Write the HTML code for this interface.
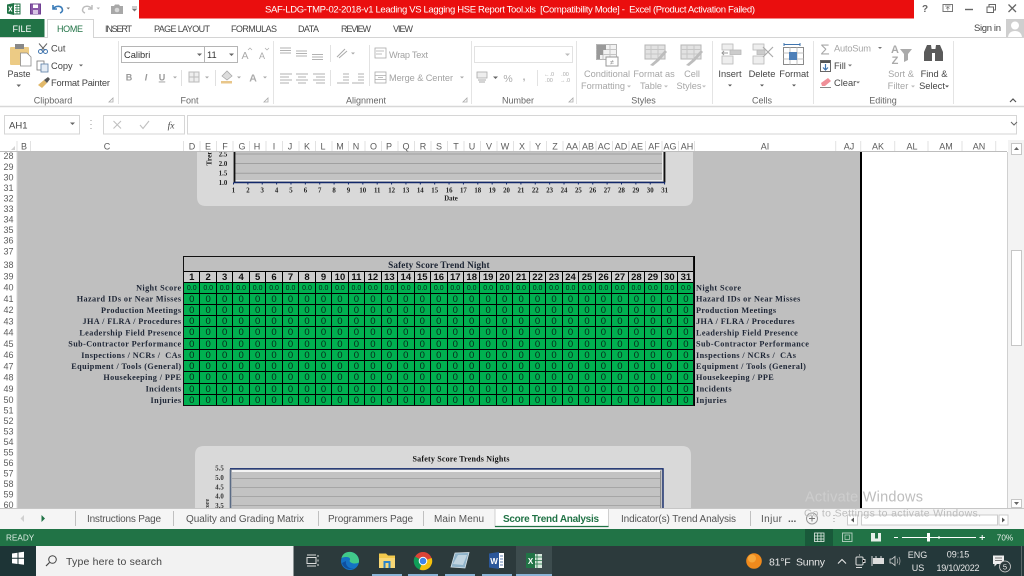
<!DOCTYPE html>
<html lang="en"><head><meta charset="utf-8"><title>Excel</title>
<style>
html,body{margin:0;padding:0;background:#fff}
#p{position:relative;width:1024px;height:576px;overflow:hidden;background:#fff;font-family:"Liberation Sans",sans-serif;filter:blur(.3px)}
#p>div,#p>svg,#p>table{position:absolute}
svg text{font-family:"Liberation Sans",sans-serif}
.sf text,text.sf{font-family:"Liberation Serif",serif;font-weight:bold}
#t{left:183px;top:256px;width:511px;table-layout:fixed;border-collapse:collapse;font-size:9.5px;color:#08281a;text-align:center}
#t td{border:1px solid #000;padding:0;background:#00b050;line-height:9px;overflow:hidden;height:10px}
#t tr.h td{background:#cdcdcd;color:#111;font-weight:bold;font-size:9.5px;height:10px}
#t tr.s td{font-size:7px;color:#06241a}
#t td.ti{background:#bfbfbf;font:bold 9.2px "Liberation Serif",serif;color:#1c2433;height:13px;padding-top:1px;line-height:12px;letter-spacing:.12px}
</style></head><body>
<div id="p">
<div style="left:0;top:151px;width:1024px;height:358px;background:#fff"></div>
<div style="left:17px;top:152px;width:843px;height:357px;background:#bfbfbf"></div>
<div style="left:860px;top:152px;width:2px;height:357px;background:#000"></div>
<div style="left:1007px;top:152px;width:1px;height:357px;background:#d0d0d0"></div>
<div style="left:1008px;top:140px;width:16px;height:369px;background:#f3f3f3"></div>
<div style="left:1010.5px;top:250px;width:11.5px;height:96px;background:#fff;border:1px solid #c6c6c6;box-sizing:border-box"></div>
<div style="left:1011px;top:143px;width:11px;height:12px;background:#fff;border:1px solid #c6c6c6;box-sizing:border-box"></div>
<div style="left:1011px;top:499px;width:11px;height:9px;background:#fff;border:1px solid #c6c6c6;box-sizing:border-box"></div>

<svg style="left:0;top:0" width="1024" height="576" viewBox="0 0 1024 576">
<!-- top chart -->
<path d="M197 152H693V197Q693 206 684 206H206Q197 206 197 197Z" fill="#d9d9d9"/>
<rect x="234" y="152" width="431" height="30" fill="#c3c3c3"/>
<path d="M234 154H663M234 163.5H663M234 173.3H663" stroke="#a0a0a0" stroke-width="1"/>
<path d="M235 180.5H662.500V152" fill="none" stroke="#eee" stroke-width="1"/>
<path d="M234.5 152V182.5M664.5 152V182.5" fill="none" stroke="#111" stroke-width="1.800"/>
<path d="M234 182.5H665" stroke="#12286a" stroke-width="1.4"/>
<path d="M233 183.5H666" stroke="#12286a" stroke-width="2" stroke-dasharray="1 13.37"/>
<g class="sf" font-size="6.8" fill="#222" text-anchor="middle">
<text x="223" y="156.5">2.5</text><text x="223" y="166">2.0</text><text x="223" y="175.5">1.5</text><text x="223" y="185">1.0</text>
<text x="233.5" y="192.5">1</text><text x="247.9" y="192.5">2</text><text x="262.2" y="192.5">3</text><text x="276.6" y="192.5">4</text><text x="291" y="192.5">5</text><text x="305.4" y="192.5">6</text><text x="319.7" y="192.5">7</text><text x="334.1" y="192.5">8</text><text x="348.5" y="192.5">9</text><text x="362.8" y="192.5">10</text><text x="377.2" y="192.5">11</text><text x="391.6" y="192.5">12</text><text x="405.9" y="192.5">13</text><text x="420.3" y="192.5">14</text><text x="434.7" y="192.5">15</text><text x="449.1" y="192.5">16</text><text x="463.4" y="192.5">17</text><text x="477.8" y="192.5">18</text><text x="492.2" y="192.5">19</text><text x="506.5" y="192.5">20</text><text x="520.9" y="192.5">21</text><text x="535.3" y="192.5">22</text><text x="549.6" y="192.5">23</text><text x="564" y="192.5">24</text><text x="578.4" y="192.5">25</text><text x="592.7" y="192.5">26</text><text x="607.1" y="192.5">27</text><text x="621.5" y="192.5">28</text><text x="635.8" y="192.5">29</text><text x="650.2" y="192.5">30</text><text x="664.6" y="192.5">31</text>
<text x="451" y="200.5">Date</text>
<text transform="translate(211.5 158) rotate(-90)" font-size="7.500" text-anchor="middle">Tren</text>
</g>
<!-- bottom chart -->
<path d="M195 509V455Q195 446 204 446H682Q691 446 691 455V509Z" fill="#d9d9d9"/>
<rect x="231" y="469" width="432" height="40" fill="#c3c3c3"/>
<rect x="232" y="470" width="428" height="2" fill="#f4f4f4"/>
<path d="M232 478.5H660M232 487.5H660M232 496.5H660M232 505.5H660" stroke="#a6a6a6" stroke-width="1"/>
<path d="M230 468.8H663V509" fill="none" stroke="#12286a" stroke-width="1.4"/>
<path d="M230.5 469V509" stroke="#5a6b85" stroke-width="1.6"/>
<path d="M660.5 471V509" stroke="#8d8d8d" stroke-width="1"/>
<g class="sf" font-size="6.8" fill="#333" text-anchor="middle">
<text x="219.500" y="470.5" font-weight="normal">5.5</text><text x="219.500" y="480">5.0</text><text x="219.500" y="489.5">4.5</text><text x="219.500" y="498.5">4.0</text><text x="219.500" y="508">3.5</text>
<text transform="translate(209 506) rotate(-90)" font-size="6" text-anchor="middle">Score</text>
</g>
<text class="sf" x="461" y="461.5" font-size="8" fill="#111" text-anchor="middle" textLength="97">Safety Score Trends Nights</text>

<!-- row labels -->
<g class="sf" font-size="8.2" fill="#1d2535" text-anchor="end" letter-spacing=".4">
<text x="181.5" y="290.5">Night Score</text><text x="181.5" y="301.5">Hazard IDs or Near Misses</text><text x="181.5" y="313">Production Meetings</text><text x="181.5" y="324">JHA / FLRA / Procedures</text><text x="181.5" y="335.5">Leadership Field Presence</text><text x="181.5" y="346.5">Sub-Contractor Performance</text><text x="181.5" y="358" xml:space="preserve">Inspections / NCRs /  CAs</text><text x="181.5" y="369">Equipment / Tools (General)</text><text x="181.5" y="380">Housekeeping / PPE</text><text x="181.5" y="391.5">Incidents</text><text x="181.5" y="403">Injuries</text>
</g>
<g class="sf" font-size="8.2" fill="#1d2535" letter-spacing=".4">
<text x="696" y="290.5">Night Score</text><text x="696" y="301.5">Hazard IDs or Near Misses</text><text x="696" y="313">Production Meetings</text><text x="696" y="324">JHA / FLRA / Procedures</text><text x="696" y="335.5">Leadership Field Presence</text><text x="696" y="346.5">Sub-Contractor Performance</text><text x="696" y="358" xml:space="preserve">Inspections / NCRs /  CAs</text><text x="696" y="369">Equipment / Tools (General)</text><text x="696" y="380">Housekeeping / PPE</text><text x="696" y="391.5">Incidents</text><text x="696" y="403">Injuries</text>
</g>

<!-- row numbers -->
<path d="M17 152V509" stroke="#d4d4d4"/>
<g font-size="9" fill="#5c5c5c" text-anchor="middle">
<text x="8.5" y="159">28</text><text x="8.5" y="170">29</text><text x="8.5" y="180.5">30</text><text x="8.5" y="191">31</text><text x="8.5" y="201.5">32</text><text x="8.5" y="212">33</text><text x="8.5" y="222.5">34</text><text x="8.5" y="233">35</text><text x="8.5" y="243.5">36</text><text x="8.5" y="254.5">37</text><text x="8.5" y="268">38</text><text x="8.5" y="279.5">39</text><text x="8.5" y="290.5">40</text><text x="8.5" y="301.8">41</text><text x="8.5" y="313">42</text><text x="8.5" y="324.3">43</text><text x="8.5" y="335.5">44</text><text x="8.5" y="346.8">45</text><text x="8.5" y="358">46</text><text x="8.5" y="369.3">47</text><text x="8.5" y="380.5">48</text><text x="8.5" y="391.8">49</text><text x="8.5" y="403">50</text><text x="8.5" y="413.5">51</text><text x="8.5" y="424">52</text><text x="8.5" y="434.5">53</text><text x="8.5" y="445">54</text><text x="8.5" y="455.5">55</text><text x="8.5" y="466">56</text><text x="8.5" y="476.5">57</text><text x="8.5" y="487">58</text><text x="8.5" y="497.5">59</text><text x="8.5" y="508">60</text>
</g>

<!-- column header -->
<rect x="0" y="139" width="1008" height="12.5" fill="#fff"/>
<path d="M0 151.5H1007" stroke="#bdbdbd"/>
<path d="M17 141V151M30.5 141V151M183.5 141V151M200 141V151M216.5 141V151M233 141V151M249.500 141V151M266 141V151M282.5 141V151M299 141V151M315.500 141V151M332 141V151M348.5 141V151M365 141V151M381.500 141V151M398 141V151M414.5 141V151M431 141V151M447.500 141V151M464 141V151M480.5 141V151M497 141V151M513.500 141V151M530 141V151M546.5 141V151M563 141V151M579.500 141V151M596 141V151M612.5 141V151M629 141V151M645.500 141V151M662 141V151M678.5 141V151M694.5 141V151M835.7 141V151M860.7 141V151M894.7 141V151M928 141V151M962 141V151M995.700 141V151" stroke="#e2e2e2"/>
<path d="M11 150L15 150L15 146Z" fill="#d0d0d0"/>
<g font-size="9" fill="#5c5c5c" text-anchor="middle">
<text x="24" y="149.500">B</text><text x="107" y="149.500">C</text><text x="192" y="149.500">D</text><text x="208" y="149.500">E</text><text x="225" y="149.500">F</text><text x="242" y="149.500">G</text><text x="257" y="149.500">H</text><text x="274" y="149.500">I</text><text x="290" y="149.500">J</text><text x="307" y="149.500">K</text><text x="323" y="149.500">L</text><text x="340" y="149.500">M</text><text x="356" y="149.500">N</text><text x="373.500" y="149.500">O</text><text x="389" y="149.500">P</text><text x="406" y="149.500">Q</text><text x="423" y="149.500">R</text><text x="439" y="149.500">S</text><text x="456" y="149.500">T</text><text x="472" y="149.500">U</text><text x="489" y="149.500">V</text><text x="505" y="149.500">W</text><text x="522" y="149.500">X</text><text x="538" y="149.500">Y</text><text x="555" y="149.500">Z</text><text x="572" y="149.500">AA</text><text x="588" y="149.500">AB</text><text x="604" y="149.500">AC</text><text x="621" y="149.500">AD</text><text x="637" y="149.500">AE</text><text x="654" y="149.500">AF</text><text x="670" y="149.500">AG</text><text x="687" y="149.500">AH</text><text x="765" y="149.500">AI</text><text x="849" y="149.500">AJ</text><text x="878" y="149.500">AK</text><text x="912" y="149.500">AL</text><text x="946" y="149.500">AM</text><text x="979" y="149.500">AN</text>
</g>
<path d="M1016.500 147L1014 150H1019Z" fill="#666"/><path d="M1016.500 505L1014 502H1019Z" fill="#666"/>

<!-- title bar -->
<rect x="139" y="0" width="775" height="18.500" fill="#ea0e0e"/>
<text x="265" y="12.500" font-size="9.500" fill="#fff" textLength="490" xml:space="preserve">SAF-LDG-TMP-02-2018-v1 Leading VS Lagging HSE Report Tool.xls  [Compatibility Mode] -  Excel (Product Activation Failed)</text>
<!-- QAT -->
<rect x="12" y="4" width="8" height="10" fill="#fff" stroke="#1f7244"/><path d="M15 6.500H20M15 9H20M15 11.500H20M17 4V14" stroke="#1f7244" stroke-width=".7"/>
<path d="M7 4.500L14 3V15L7 13.500Z" fill="#1f7244"/><path d="M8.800 6.500L12 11.500M12 6.500L8.800 11.500" stroke="#fff" stroke-width="1.100"/>
<rect x="30.500" y="4" width="10" height="10" fill="#8a5aa8" stroke="#6f3f92"/><rect x="33" y="4.500" width="5" height="3.500" fill="#fff"/><rect x="33" y="10" width="5" height="4" fill="#d8c5e4"/>
<path d="M53 5V9H57M53 9C56 5 62 5.500 62.500 10Q62.500 12 60 13" fill="none" stroke="#3b7cb8" stroke-width="1.600"/>
<path d="M66.500 7.500H70L68.300 9.500Z" fill="#777"/>
<path d="M92 5V9H88M92 9C89 5 83 5.500 82.500 10Q82.500 12 85 13" fill="none" stroke="#bdbdbd" stroke-width="1.500"/>
<path d="M96.500 7.500H100L98.300 9.500Z" fill="#bbb"/>
<path d="M111 6H114L115 4.500H119L120 6H123V14H111Z" fill="#a8a8a8"/><circle cx="117" cy="10" r="2.300" fill="#d8d8d8"/>
<path d="M132 7H137M132.500 9L136.500 9L134.500 11Z" stroke="#777" stroke-width=".7" fill="#777"/>
<!-- window ctl -->
<text x="925" y="12" font-size="10" font-weight="bold" fill="#666" text-anchor="middle">?</text>
<rect x="943" y="4.500" width="9.500" height="7" fill="none" stroke="#777"/><path d="M945 6H950.500M947.800 10.500V7.500M946 8.500L947.800 7L949.500 8.500" fill="none" stroke="#777" stroke-width=".8"/>
<path d="M965 9.500H973" stroke="#666" stroke-width="1.400"/>
<rect x="987" y="7" width="6.500" height="5.500" fill="none" stroke="#666"/><path d="M989 7V4.500H995.500V10H993.500" fill="none" stroke="#666"/>
<path d="M1008.500 4.500L1016 12M1016 4.500L1008.500 12" stroke="#666" stroke-width="1.300"/>

<!-- tabs -->
<rect x="0" y="19" width="44.500" height="18" fill="#217346"/>
<text x="22" y="32" font-size="9" fill="#fff" text-anchor="middle">FILE</text>
<path d="M0 37.500H47.500V19.500H93.500V37.500H1024" fill="#fff" stroke="#d4d4d4"/>
<text x="57" y="32" font-size="9" fill="#217346" textLength="26">HOME</text>
<g font-size="9" fill="#444">
<text x="105" y="32" textLength="27">INSERT</text><text x="154" y="32" textLength="56">PAGE LAYOUT</text><text x="231" y="32" textLength="46">FORMULAS</text><text x="298" y="32" textLength="21">DATA</text><text x="341" y="32" textLength="30">REVIEW</text><text x="393" y="32" textLength="20">VIEW</text>
<text x="974" y="31" font-size="9.500" textLength="27">Sign in</text>
</g>
<rect x="1006" y="19" width="18" height="18" fill="#cfcfcf"/><circle cx="1015" cy="25.500" r="4" fill="#fff"/><path d="M1008 37Q1009 31 1015 31Q1021 31 1022 37Z" fill="#fff"/>
<!-- ribbon border -->
<path d="M0 106.500H1024" stroke="#d8d8d8" stroke-width="1.500"/>
<path d="M118.500 41V104M273.500 41V104M471.500 41V104M576.500 41V104M712.500 41V104M813.500 41V104M953.500 41V104" stroke="#e4e4e4"/>
<g font-size="9" fill="#666" text-anchor="middle">
<text x="53" y="103.500">Clipboard</text><text x="189.500" y="103.500">Font</text><text x="366" y="103.500">Alignment</text><text x="518" y="103.500">Number</text><text x="643.500" y="103.500">Styles</text><text x="762" y="103.500">Cells</text><text x="883" y="103.500">Editing</text>
</g>
<path d="M109 102H113V98ZM264 102H268V98ZM463 102H467V98ZM569 102H573V98Z" fill="none" stroke="#aaa" stroke-width=".8"/>
<path d="M1010 102L1013 99L1016 102" fill="none" stroke="#555" stroke-width="1.200"/>

<!-- clipboard group -->
<rect x="10" y="47" width="19" height="18" rx="1" fill="#eccb85"/><rect x="15" y="44" width="9" height="5" fill="#888"/>
<path d="M20.500 53H27L31 57V66H20.500Z" fill="#fff" stroke="#8a8a8a" stroke-width=".8"/>
<text x="19" y="77" font-size="9" fill="#444" text-anchor="middle">Paste</text><path d="M16.500 84.500H21L18.700 87Z" fill="#666"/>
<path d="M39 43.500L45 50.500M47 43.500L41 50.500" stroke="#666" stroke-width="1"/><circle cx="40.500" cy="51.500" r="2" fill="none" stroke="#3f74ae"/><circle cx="45.500" cy="51.500" r="2" fill="none" stroke="#3f74ae"/>
<rect x="37" y="61" width="7" height="9" fill="#fff" stroke="#777" stroke-width=".8"/><rect x="41" y="64" width="7" height="8" fill="#e4ecf5" stroke="#5a7ea6" stroke-width=".8"/>
<path d="M38 85L44 80L47 83L42 88Z" fill="#e2b96a"/><path d="M44 80L48 77L50 79L47 83Z" fill="#555"/>
<g font-size="9.300" fill="#444"><text x="51" y="51.500">Cut</text><text x="51" y="69">Copy</text><text x="51" y="86" textLength="59">Format Painter</text></g>
<path d="M79 64.500H83L81 66.500Z" fill="#666"/>
<!-- font -->
<rect x="121.500" y="46.500" width="116" height="16" fill="#fff" stroke="#b5b5b5"/><path d="M204.500 46.500V62.500" stroke="#b5b5b5"/>
<text x="124" y="58" font-size="9.300" fill="#333">Calibri</text><text x="207" y="58" font-size="9.300" fill="#333">11</text>
<path d="M197 53.500H202L199.500 56ZM229 53.500H234L231.500 56Z" fill="#666"/>
<text x="245" y="59" font-size="10.500" fill="#aaa" text-anchor="middle">A</text><text x="262" y="59" font-size="9" fill="#aaa" text-anchor="middle">A</text>
<path d="M248 50L250 48L252 50M265 48L267 50L269 48" fill="none" stroke="#aaa" stroke-width=".7"/>
<text x="129" y="80.500" font-size="9" font-weight="bold" fill="#999" text-anchor="middle">B</text>
<text x="146" y="80.500" font-size="9" font-weight="bold" font-style="italic" fill="#999" text-anchor="middle">I</text>
<text x="162" y="80.500" font-size="9" font-weight="bold" fill="#999" text-anchor="middle" text-decoration="underline">U</text>
<path d="M173 76.500H177L175 78.500ZM205 76.500H209L207 78.500ZM237 76.500H241L239 78.500ZM263 76.500H267L265 78.500Z" fill="#aaa"/>
<path d="M181.500 70V86M215.500 70V86" stroke="#e0e0e0"/>
<rect x="189" y="72" width="10" height="10" fill="#eee" stroke="#bbb"/><path d="M194 72V82M189 77H199" stroke="#bbb"/>
<path d="M222 76L227 71L232 76L227 80Z" fill="#ddd" stroke="#aaa" stroke-width=".8"/><rect x="221" y="81" width="11" height="2.500" fill="#e8c68a"/>
<text x="253" y="81.500" font-size="10.500" font-weight="bold" fill="#aaa" text-anchor="middle">A</text>
<!-- alignment -->
<path d="M280 48H291M280 50.500H291M280 53H291M296 51H307M296 53.500H307M296 56H307M312 54.500H323M312 57H323M312 59.500H323" stroke="#999" stroke-width=".8"/>
<path d="M330.500 45V62M330.500 70V86M369.500 45V86" stroke="#e2e2e2"/>
<path d="M337 57L345 49M339 58L347 51" stroke="#aaa" stroke-width="1"/><path d="M351 52.500H355L353 54.500Z" fill="#aaa"/>
<path d="M280 74H292M280 77H289M280 80H292M280 83H289M296 74H308M298 77H306M296 80H308M298 83H306M313 74H325M316 77H325M313 80H325M316 83H325M343 74H349M343 77H349M343 80H349M337 83H349M358 74H364M358 77H364M358 80H364M352 83H364" stroke="#999" stroke-width=".8"/>
<rect x="375" y="48" width="11" height="10" fill="none" stroke="#aaa" stroke-width=".8"/><path d="M376 51H384M376 54H382" stroke="#aaa" stroke-width=".8"/>
<rect x="375" y="72" width="11" height="11" fill="none" stroke="#aaa" stroke-width=".8"/><path d="M375 75.500H386M375 79.500H386M378 77.500H383" stroke="#aaa" stroke-width=".8"/>
<g font-size="9.200" fill="#a2a2a2"><text x="389" y="58" textLength="39">Wrap Text</text><text x="389" y="81" textLength="64">Merge &amp; Center</text></g>
<path d="M460 76.500H464L462 78.500Z" fill="#aaa"/>
<!-- number -->
<rect x="474.500" y="46.500" width="98" height="16" fill="#fff" stroke="#e2e2e2"/><path d="M565 53.500H570L567.500 56Z" fill="#bbb"/>
<rect x="477" y="72" width="10" height="6" fill="#eee" stroke="#aaa" stroke-width=".8"/><path d="M478 80H486M479 82H485" stroke="#aaa"/><path d="M493 76.500H498L495.500 79Z" fill="#666"/>
<text x="508" y="82" font-size="10.500" fill="#aaa" text-anchor="middle">%</text><text x="524" y="80" font-size="10" font-weight="bold" fill="#aaa" text-anchor="middle">,</text>
<path d="M537.500 70V86" stroke="#e2e2e2"/>
<g font-size="5.500" fill="#aaa" text-anchor="middle"><text x="549" y="76">←.0</text><text x="549" y="82">.00</text><text x="565" y="76">.00</text><text x="565" y="82">→.0</text></g>
<!-- styles -->
<rect x="596.500" y="44.500" width="20" height="15" fill="#f2f2f2" stroke="#b5b5b5"/><path d="M596.500 49.500H616.500M596.500 54.500H616.500M603 44.500V59.500M610 44.500V59.500" stroke="#c4c4c4"/><rect x="597" y="45" width="9" height="5" fill="#999"/><rect x="597" y="50" width="6" height="5" fill="#999"/><rect x="597" y="55" width="3" height="4" fill="#999"/>
<rect x="606" y="57" width="12" height="9" fill="#fff" stroke="#999"/><text x="612" y="64.500" font-size="7" fill="#888" text-anchor="middle">≠</text>
<rect x="645" y="45" width="20" height="14" fill="#e2e2e2" stroke="#b5b5b5"/><path d="M645 49.500H665M645 54H665M651 45V59M658 45V59" stroke="#c6c6c6"/><path d="M650 65L657 59L665 50L667 52L659 61L653 66Z" fill="#bdbdbd"/>
<rect x="681" y="45" width="20" height="14" fill="#e2e2e2" stroke="#b5b5b5"/><path d="M681 49.500H701M681 54H701M687 45V59M694 45V59" stroke="#c6c6c6"/><path d="M686 65L693 59L701 50L703 52L695 61L689 66Z" fill="#bdbdbd"/>
<g font-size="9.200" fill="#a6a6a6" text-anchor="middle"><text x="607" y="77" textLength="46">Conditional</text><text x="603" y="89">Formatting</text><text x="654" y="77">Format as</text><text x="651" y="89">Table</text><text x="692" y="77">Cell</text><text x="689" y="89">Styles</text></g>
<path d="M627 85.500H631L629 87.500ZM664 85.500H668L666 87.500ZM702 85.500H706L704 87.500Z" fill="#bbb"/>
<!-- cells -->
<g stroke="#b8b8b8" fill="#eee" stroke-width=".8"><rect x="722" y="44" width="11" height="6"/><rect x="722" y="56" width="11" height="8"/><rect x="730" y="50" width="11" height="4.500" fill="#ccc"/><rect x="753" y="44" width="11" height="6"/><rect x="753" y="56" width="11" height="8"/><rect x="757" y="50" width="8" height="4.500" fill="#ccc"/></g>
<path d="M722 53H728M724 51L722 53L724 55" fill="none" stroke="#999"/><path d="M763 47L773 57M773 47L763 57" stroke="#aaa" stroke-width="1.200"/>
<rect x="783.500" y="47.500" width="20" height="17" fill="#fff" stroke="#8a8a8a"/><path d="M783.500 53H803.500M783.500 59H803.500M790 47.500V64.500M797 47.500V64.500" stroke="#c0c0c0"/><rect x="789" y="52" width="8" height="8" fill="#4d7fb8"/><path d="M784 44.500H800M784 43V46M800 43V46" stroke="#3f74ae"/>
<g font-size="9.300" fill="#444" text-anchor="middle"><text x="730" y="77">Insert</text><text x="762" y="77">Delete</text><text x="794" y="77">Format</text></g>
<path d="M728 84.500H732L730 86.500ZM760 84.500H764L762 86.500ZM792 84.500H796L794 86.500Z" fill="#555"/>
<!-- editing -->
<text x="825" y="54.500" font-size="15" fill="#a8a8a8" text-anchor="middle">Σ</text>
<rect x="820.500" y="60.500" width="10" height="11" fill="#fff" stroke="#666"/><rect x="821" y="61" width="9" height="2" fill="#555"/><path d="M825.500 64V70M823 67.500L825.500 70L828 67.500" fill="none" stroke="#3f74ae" stroke-width="1.200"/>
<path d="M821 83L828 78L831 81L825 86H822Z" fill="#ef8f98"/><path d="M820 87.500H831" stroke="#888"/>
<text x="834" y="51.500" font-size="9.300" fill="#a6a6a6" textLength="37">AutoSum</text>
<g font-size="9.300" fill="#444"><text x="834" y="69">Fill</text><text x="834" y="86">Clear</text></g>
<path d="M878 47H882L880 49ZM848 64.500H852L850 66.500ZM856 81.500H860L858 83.500Z" fill="#777"/>
<text x="895" y="53" font-size="11" font-weight="bold" fill="#aaa" text-anchor="middle">A</text><text x="895" y="64" font-size="11" font-weight="bold" fill="#aaa" text-anchor="middle">Z</text>
<path d="M900 49H912L908 54V60L904 62V54Z" fill="#aaa"/>
<path d="M924 61V52L927 45H931L932 52V61ZM935 61V52L936 45H940L943 52V61Z" fill="#5a5a5a"/><rect x="931" y="49" width="5" height="4" fill="#5a5a5a"/>
<g font-size="9.300" text-anchor="middle"><text x="901" y="77" fill="#a6a6a6">Sort &amp;</text><text x="898" y="89" fill="#a6a6a6">Filter</text><text x="934" y="77" fill="#444">Find &amp;</text><text x="932" y="89" fill="#444">Select</text></g>
<path d="M911 85.500H915L913 87.500Z" fill="#bbb"/><path d="M945 85.500H949L947 87.500Z" fill="#555"/>

<!-- formula bar -->
<rect x="4.500" y="115.500" width="75" height="18.500" fill="#fff" stroke="#d6d6d6"/>
<text x="9" y="128.500" font-size="9.500" fill="#444">AH1</text><path d="M70 122.500H75L72.500 125Z" fill="#666"/>
<path d="M91 120V121M91 124V125M91 128V129" stroke="#999"/>
<rect x="103.500" y="115.500" width="81" height="18.500" fill="#fff" stroke="#d6d6d6"/>
<rect x="187.500" y="115.500" width="829" height="18.500" fill="#fff" stroke="#d6d6d6"/>
<path d="M113.500 121L121 128.500M121 121L113.500 128.500" stroke="#c0c0c0" stroke-width="1.100"/>
<path d="M140 125L143 128.500L149 121" fill="none" stroke="#c0c0c0" stroke-width="1.100"/>
<text x="171" y="128.500" font-size="9.500" font-style="italic" fill="#444" text-anchor="middle" style="font-family:'Liberation Serif',serif">fx</text>
<path d="M1011 122L1014 125L1017 122" fill="none" stroke="#666" stroke-width="1"/>

<!-- sheet tabs -->
<rect x="0" y="509" width="1024" height="20" fill="#f5f5f5"/>
<path d="M0 508.500H1024" stroke="#c6c6c6"/>
<rect x="495" y="509" width="113.500" height="18" fill="#fff"/>
<path d="M495 508.500V526.500H608.500V508.500" fill="none" stroke="#d0d0d0"/><path d="M495 526.500H608.500" stroke="#217346" stroke-width="1.300"/>
<path d="M75.500 511V526M173.500 511V526M318.500 511V526M423.500 511V526M750.500 511V526" stroke="#c0c0c0"/>
<path d="M24 515L20.500 518.500L24 522Z" fill="#d0d0d0"/><path d="M41.500 515L45 518.500L41.500 522Z" fill="#217346"/>
<g font-size="10" fill="#555"><text x="87" y="522" textLength="74">Instructions Page</text><text x="186" y="522" textLength="118">Quality and Grading Matrix</text><text x="328" y="522" textLength="85">Programmers Page</text><text x="434" y="522" textLength="50">Main Menu</text><text x="621" y="522" textLength="115">Indicator(s) Trend Analysis</text><text x="761" y="522" textLength="21">Injur</text></g>
<text x="503" y="522" font-size="10" font-weight="bold" fill="#217346" textLength="96">Score Trend Analysis</text>
<text x="788" y="522" font-size="10" font-weight="bold" fill="#555">...</text>
<circle cx="812" cy="518.500" r="5.500" fill="none" stroke="#999"/><path d="M809 518.500H815M812 515.500V521.500" stroke="#777"/>
<path d="M834 515V516M834 518V519M834 521V522" stroke="#999"/>
<rect x="847.500" y="515" width="10" height="10" fill="#fff" stroke="#ccc"/><path d="M854 517.500L851 520L854 522.500Z" fill="#555"/>
<rect x="861.500" y="515" width="136" height="10" fill="#fff" stroke="#ccc"/>
<rect x="999" y="515" width="9" height="10" fill="#fff" stroke="#ccc"/><path d="M1002 517.500L1005 520L1002 522.500Z" fill="#555"/>

<!-- status bar -->
<rect x="0" y="529" width="1024" height="17" fill="#217346"/>
<text x="6" y="540.500" font-size="8.200" fill="#dfeee5">READY</text>
<rect x="805" y="529" width="28" height="17" fill="#19593a"/>
<rect x="814.500" y="533" width="9.500" height="8.500" fill="none" stroke="#e6efe9" stroke-width=".8"/><path d="M814.500 536H824M814.500 539H824M817.700 533V541.500M821 533V541.500" stroke="#e6efe9" stroke-width=".7"/>
<rect x="842.500" y="533" width="9.500" height="8.500" fill="none" stroke="#b9d3c4" stroke-width=".9"/><rect x="845" y="535" width="4.500" height="4.500" fill="none" stroke="#b9d3c4" stroke-width=".7"/>
<rect x="871" y="533" width="10" height="8.500" fill="#e6efe9"/><rect x="875" y="533" width="3" height="5.500" fill="#217346"/>
<path d="M894 537.500H898M902 537.500H976M979.500 537.500H985M982.200 535V540" stroke="#fff" stroke-width="1"/>
<rect x="927" y="533" width="3" height="8.500" fill="#fff"/><path d="M939 536V539" stroke="#fff"/>
<text x="1005" y="540.500" font-size="8.200" fill="#e6efe9" text-anchor="middle">70%</text>

<!-- taskbar -->
<rect x="0" y="546" width="1024" height="30" fill="#2c3a3c"/>
<rect x="0" y="546" width="36" height="30" fill="#1d3436"/>
<rect x="516" y="546" width="36" height="30" fill="#3d4c4e"/>
<rect x="860" y="546" width="164" height="30" fill="#24383a"/>
<path d="M12 553.500L17.500 552.700V557.800H12ZM18.500 552.500L24 551.700V557.800H18.500ZM12 558.800H17.500V564L12 563.200ZM18.500 558.800H24V564.800L18.500 564Z" fill="#fff"/>
<rect x="36" y="546" width="257.500" height="30" fill="#f2f2f2"/>
<circle cx="52.500" cy="559.500" r="3.800" fill="none" stroke="#444" stroke-width="1"/><path d="M49.500 562.500L46 566" stroke="#444" stroke-width="1.200"/>
<text x="66" y="565" font-size="10.500" fill="#444" textLength="96">Type here to search</text>
<path d="M307 555H316M307 566H316" stroke="#ddd"/><rect x="307" y="557.500" width="9" height="6" fill="none" stroke="#ddd"/><path d="M318 555V557M318 559.500V561.500M318 564V566" stroke="#ddd"/>
<circle cx="350" cy="561" r="9" fill="#1572c4"/><path d="M341.500 558C343 552 349 551 353 552.500C357 554 359.500 558 359 562.500C356 564 351 564 349.500 561C352 557 346 556 341.500 558Z" fill="#41c98a"/><path d="M346 561C345 566 350 570 355 568C350 570 344 569 342 563Z" fill="#0f4f9e"/>
<path d="M379 553.500H386L388 555.500H395V568H379Z" fill="#f2c94c"/><rect x="379" y="558" width="16" height="10" fill="#f8d775"/><rect x="383.500" y="561" width="7" height="7" fill="#2c83c9"/><rect x="385.500" y="563" width="3" height="5" fill="#f8d775"/>
<circle cx="423" cy="561" r="9" fill="#db4437"/><path d="M423 561L431 565.500A9 9 0 0 1 419.500 569.500Z" fill="#f4c20d"/><path d="M423 561L419.500 569.500A9 9 0 0 1 415 556.500Z" fill="#0f9d58"/><path d="M423 561L431 565.500A9 9 0 0 0 431.700 558Z" fill="#f4c20d"/><circle cx="423" cy="561" r="4.300" fill="#fff"/><circle cx="423" cy="561" r="3.300" fill="#3f84e8"/>
<path d="M455 553L469 552.500L465 568L451 567Z" fill="#8fb3c9" stroke="#d6e2ea" stroke-width=".8"/><path d="M458 555L467 555L463 565L453 564Z" fill="#c0d4e0"/>
<rect x="492" y="553" width="12" height="15" fill="#fff"/><path d="M489 553.500L499 552V569L489 567.500Z" fill="#2b579a"/><text x="494" y="564" font-size="8" font-weight="bold" fill="#fff" text-anchor="middle">W</text><path d="M500 556H503M500 559H503M500 562H503M500 565H503" stroke="#2b579a" stroke-width=".8"/>
<rect x="532" y="554" width="10" height="14" fill="#d8e8dd"/><path d="M532 557H542M532 560.500H542M532 564H542M537 554V568" stroke="#217346" stroke-width=".8"/><rect x="526" y="553" width="9" height="15" fill="#217346"/><text x="530.500" y="564" font-size="8" font-weight="bold" fill="#fff" text-anchor="middle">X</text>
<rect x="372" y="574" width="30" height="2" fill="#8ab4d6"/><rect x="408" y="574" width="30" height="2" fill="#8ab4d6"/><rect x="445" y="574" width="30" height="2" fill="#8ab4d6"/><rect x="482" y="574" width="30" height="2" fill="#8ab4d6"/><rect x="516" y="574" width="36" height="2" fill="#8ab4d6"/>
<!-- tray -->
<circle cx="754" cy="561" r="7.800" fill="#f08a1c"/><circle cx="752" cy="558.500" r="4" fill="#f7a83c"/>
<text x="769" y="565.500" font-size="10.500" fill="#e8e8e8" textLength="56" xml:space="preserve">81°F  Sunny</text>
<path d="M838 563.500L842 559.500L846 563.500" fill="none" stroke="#e8e8e8" stroke-width="1.100"/>
<rect x="856" y="557" width="7" height="8" rx="1" fill="none" stroke="#ddd"/><path d="M856 567.500H862M863 559.500H865V562.500H863M859 555H860" stroke="#ddd"/>
<rect x="873" y="558" width="11" height="6" fill="#ddd"/><path d="M872 556V566M876 556V558M881 556V558" stroke="#ddd"/>
<path d="M890 559H892L895 556.500V565.500L892 563H890Z" fill="none" stroke="#ddd" stroke-width=".8"/><path d="M897 558.500Q898.500 561 897 563.500M899 557Q901 561 899 565" fill="none" stroke="#bbb" stroke-width=".7"/>
<g font-size="9" fill="#e8e8e8" text-anchor="middle"><text x="917.500" y="558">ENG</text><text x="918" y="571">US</text><text x="958" y="557.500">09:15</text><text x="958" y="571" textLength="43">19/10/2022</text></g>
<path d="M993 555.500H1004V564H997L994.500 566.500V564H993Z" fill="#eee"/><path d="M995 558H1002M995 560.500H1002" stroke="#555" stroke-width=".7"/>
<circle cx="1005" cy="566.500" r="5.500" fill="#2c3a3c" stroke="#ccc" stroke-width=".8"/><text x="1005" y="569.500" font-size="7.500" fill="#eee" text-anchor="middle">5</text>
<path d="M1021.500 546V576" stroke="#5a6668"/>
</svg>

<table id="t"><colgroup><col span="31" style="width:16.484px"></colgroup>
<tr><td class="ti" colspan="31">Safety Score Trend Night</td></tr>
<tr class="h"><td>1<td>2<td>3<td>4<td>5<td>6<td>7<td>8<td>9<td>10<td>11<td>12<td>13<td>14<td>15<td>16<td>17<td>18<td>19<td>20<td>21<td>22<td>23<td>24<td>25<td>26<td>27<td>28<td>29<td>30<td>31</tr>
<tr class="s"><td>0.0<td>0.0<td>0.0<td>0.0<td>0.0<td>0.0<td>0.0<td>0.0<td>0.0<td>0.0<td>0.0<td>0.0<td>0.0<td>0.0<td>0.0<td>0.0<td>0.0<td>0.0<td>0.0<td>0.0<td>0.0<td>0.0<td>0.0<td>0.0<td>0.0<td>0.0<td>0.0<td>0.0<td>0.0<td>0.0<td>0.0</tr>
<tr><td>0<td>0<td>0<td>0<td>0<td>0<td>0<td>0<td>0<td>0<td>0<td>0<td>0<td>0<td>0<td>0<td>0<td>0<td>0<td>0<td>0<td>0<td>0<td>0<td>0<td>0<td>0<td>0<td>0<td>0<td>0</tr>
<tr><td>0<td>0<td>0<td>0<td>0<td>0<td>0<td>0<td>0<td>0<td>0<td>0<td>0<td>0<td>0<td>0<td>0<td>0<td>0<td>0<td>0<td>0<td>0<td>0<td>0<td>0<td>0<td>0<td>0<td>0<td>0</tr>
<tr><td>0<td>0<td>0<td>0<td>0<td>0<td>0<td>0<td>0<td>0<td>0<td>0<td>0<td>0<td>0<td>0<td>0<td>0<td>0<td>0<td>0<td>0<td>0<td>0<td>0<td>0<td>0<td>0<td>0<td>0<td>0</tr>
<tr style="height:12px"><td>0<td>0<td>0<td>0<td>0<td>0<td>0<td>0<td>0<td>0<td>0<td>0<td>0<td>0<td>0<td>0<td>0<td>0<td>0<td>0<td>0<td>0<td>0<td>0<td>0<td>0<td>0<td>0<td>0<td>0<td>0</tr>
<tr><td>0<td>0<td>0<td>0<td>0<td>0<td>0<td>0<td>0<td>0<td>0<td>0<td>0<td>0<td>0<td>0<td>0<td>0<td>0<td>0<td>0<td>0<td>0<td>0<td>0<td>0<td>0<td>0<td>0<td>0<td>0</tr>
<tr><td>0<td>0<td>0<td>0<td>0<td>0<td>0<td>0<td>0<td>0<td>0<td>0<td>0<td>0<td>0<td>0<td>0<td>0<td>0<td>0<td>0<td>0<td>0<td>0<td>0<td>0<td>0<td>0<td>0<td>0<td>0</tr>
<tr><td>0<td>0<td>0<td>0<td>0<td>0<td>0<td>0<td>0<td>0<td>0<td>0<td>0<td>0<td>0<td>0<td>0<td>0<td>0<td>0<td>0<td>0<td>0<td>0<td>0<td>0<td>0<td>0<td>0<td>0<td>0</tr>
<tr style="height:12px"><td>0<td>0<td>0<td>0<td>0<td>0<td>0<td>0<td>0<td>0<td>0<td>0<td>0<td>0<td>0<td>0<td>0<td>0<td>0<td>0<td>0<td>0<td>0<td>0<td>0<td>0<td>0<td>0<td>0<td>0<td>0</tr>
<tr><td>0<td>0<td>0<td>0<td>0<td>0<td>0<td>0<td>0<td>0<td>0<td>0<td>0<td>0<td>0<td>0<td>0<td>0<td>0<td>0<td>0<td>0<td>0<td>0<td>0<td>0<td>0<td>0<td>0<td>0<td>0</tr>
<tr><td>0<td>0<td>0<td>0<td>0<td>0<td>0<td>0<td>0<td>0<td>0<td>0<td>0<td>0<td>0<td>0<td>0<td>0<td>0<td>0<td>0<td>0<td>0<td>0<td>0<td>0<td>0<td>0<td>0<td>0<td>0</tr>
</table>
<div style="left:183px;top:256px;width:511px;height:149.500px;box-sizing:border-box;border:1.500px solid #111"></div>

<svg style="left:0;top:0" width="1024" height="576" viewBox="0 0 1024 576">
<text x="805" y="501.500" font-size="14.500" textLength="118"><tspan fill="#cdcdcd">Activate </tspan><tspan fill="#bdbdbd">Windows</tspan></text>
<text x="804" y="516.500" font-size="10.500" fill="#bcbcbc" textLength="177">Go to Settings to activate Windows.</text>
</svg>
</div>
</body></html>
